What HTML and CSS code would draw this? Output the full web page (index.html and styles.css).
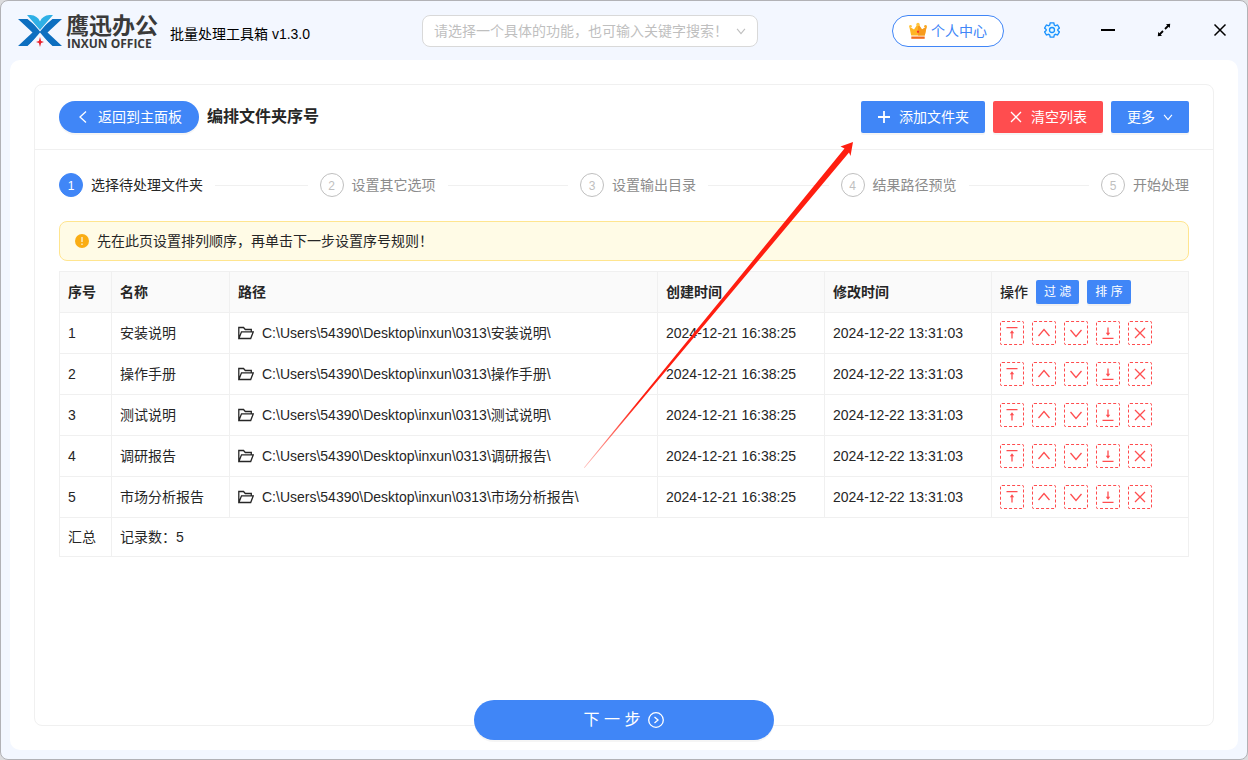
FILE: index.html
```html
<!DOCTYPE html>
<html lang="zh-CN">
<head>
  <meta charset="UTF-8">
  <meta name="viewport" content="width=device-width, initial-scale=1.0">
  <title>鹰迅办公 - 批量处理工具箱</title>
  <link rel="stylesheet" href="styles.css">
</head>
<body>
  <!-- shared icons -->
  <svg class="sprite" aria-hidden="true">
    <symbol id="i-left" viewBox="0 0 14 14"><path d="M10 1.500 4 7l6 5.500"/></symbol>
    <symbol id="i-up" viewBox="0 0 14 14"><path d="M1.500 10 7 3.500l5.500 6.500"/></symbol>
    <symbol id="i-down" viewBox="0 0 14 14"><path d="M1.500 4 7 10.500 12.500 4"/></symbol>
    <symbol id="i-plus" viewBox="0 0 14 14"><path d="M7 1v12M1 7h12" stroke-width="1.800"/></symbol>
    <symbol id="i-close" viewBox="0 0 14 14"><path d="M2 2l10 10M12 2 2 12"/></symbol>
    <symbol id="i-top" viewBox="0 0 14 14"><path d="M1.500 1.700h11M7 12.500V6"/><path d="M4.800 7.200 7 4.200l2.200 3z" class="fill"/></symbol>
    <symbol id="i-bottom" viewBox="0 0 14 14"><path d="M1.500 12.300h11M7 1.500V8"/><path d="M4.800 6.800 7 9.800l2.200-3z" class="fill"/></symbol>
    <symbol id="i-folder" viewBox="0 0 16 14"><path d="M3 12.500H.8V1.500h4.700l1.800 2h6v2.300M.9 12.500l2.600-6.700h11.800l-2.600 6.700z"/></symbol>
  </svg>

  <div class="window">
    <header class="titlebar">
      <div class="brand">
        <svg class="logo" viewBox="0 0 44 32" aria-hidden="true">
          <path fill="#0d6fc0" d="M0 4h9.500L22 14.500 34.500 4H44L29.500 17.500 44 31h-9.500L22 19.500 9.500 31H0l14.500-13.500z"/>
          <path fill="#f3f7ff" d="M22 17.500 10 31.500h24z"/>
          <path fill="#f3f7ff" d="M8 0h28L22 16.500z"/>
          <path fill="#2fb0e6" d="M9 0h3.500Q19.500.5 22 6.500 24.500.5 31.500 0H35L22 15z"/>
          <path fill="#e8222e" d="M22 22l1.100 3.900L26 27l-2.900 1.100L22 32l-1.100-3.900L18 27l2.900-1.100z"/>
        </svg>
        <div class="brand-name">
          <strong class="brand-cn">鹰迅办公</strong>
          <span class="brand-en">INXUN OFFICE</span>
        </div>
        <span class="version">批量处理工具箱 v1.3.0</span>
      </div>
      <div class="search">
        <input type="text" aria-label="搜索功能" placeholder="请选择一个具体的功能，也可输入关键字搜索！">
        <svg class="icon small"><use href="#i-down"/></svg>
      </div>
      <div class="tools">
        <button type="button" class="user">
          <svg class="crown" viewBox="0 0 18 18" aria-hidden="true">
            <path fill="#ffb524" d="M.3 4.500 5 7.500 8 3h2l3 4.500 4.700-3-1.900 9H2.200z"/>
            <path fill="#f79a1c" d="M9 3h1l3 4.500 4.700-3-1.900 9H9z"/>
            <circle cx="9" cy="2.500" r="1.700" fill="#ffc53d"/>
            <circle cx="1.500" cy="4.200" r="1.300" fill="#ffc53d"/>
            <circle cx="16.500" cy="4.200" r="1.300" fill="#f9a825"/>
            <path fill="#f5222d" d="M9 8.200l1.200 1.500L9 11.200 7.800 9.700z"/>
            <path fill="#f26a1b" d="M2.300 14.500h13.400v2.300H2.300z"/>
          </svg>
          个人中心
        </button>
        <button type="button" class="tool gear" aria-label="设置">
          <svg width="16" height="16" viewBox="0 0 16 16">
            <path d="M6.200.8h3.600l.5 2.200 1.200.7 2.100-.7 1.800 3.100L13.800 7.500v1l1.600 1.400-1.800 3.100-2.100-.7-1.200.7-.5 2.200H6.200L5.700 13l-1.200-.7-2.100.7L.6 9.900l1.600-1.400v-1L.6 6.100 2.400 3l2.100.7L5.700 3z"/>
            <circle cx="8" cy="8" r="2.500"/>
          </svg>
        </button>
        <button type="button" class="tool" aria-label="最小化">
          <svg width="14" height="14" viewBox="0 0 14 14"><path d="M0 7h14" stroke-width="2"/></svg>
        </button>
        <button type="button" class="tool" aria-label="最大化">
          <svg width="14" height="14" viewBox="0 0 14 14">
            <path d="M8 6l4-4M6 8l-4 4" stroke-width="1.800"/>
            <path class="fill" d="M9 1.200 13.200.8 12.800 5zM5 12.800.8 13.200 1.200 9z"/>
          </svg>
        </button>
        <button type="button" class="tool" aria-label="关闭">
          <svg width="14" height="14" viewBox="0 0 14 14"><path d="M1.500 1.500l11 11M12.500 1.500l-11 11" stroke-width="1.500"/></svg>
        </button>
      </div>
    </header>

    <main class="panel">
      <section class="card">
        <div class="card-head">
          <button type="button" class="btn pill"><svg class="icon"><use href="#i-left"/></svg>返回到主面板</button>
          <h1>编排文件夹序号</h1>
          <div class="actions">
            <button type="button" class="btn"><svg class="icon"><use href="#i-plus"/></svg>添加文件夹</button>
            <button type="button" class="btn danger"><svg class="icon"><use href="#i-close"/></svg>清空列表</button>
            <button type="button" class="btn">更多<svg class="icon small"><use href="#i-down"/></svg></button>
          </div>
        </div>

        <div class="card-body">
          <ol class="steps">
            <li class="step active"><span class="num">1</span>选择待处理文件夹</li>
            <li class="step"><span class="num">2</span>设置其它选项</li>
            <li class="step"><span class="num">3</span>设置输出目录</li>
            <li class="step"><span class="num">4</span>结果路径预览</li>
            <li class="step"><span class="num">5</span>开始处理</li>
          </ol>

          <div class="alert">
            <svg class="warn" viewBox="0 0 14 14" aria-hidden="true">
              <circle cx="7" cy="7" r="7" fill="#faad14"/>
              <path d="M7 3v5M7 9.500v1.500" stroke="#fffbe6" stroke-width="1.200"/>
            </svg>
            先在此页设置排列顺序，再单击下一步设置序号规则！
          </div>

          <table class="files">
            <colgroup>
              <col class="c-no">
              <col class="c-name">
              <col>
              <col class="c-time">
              <col class="c-time">
              <col class="c-ops">
            </colgroup>
            <thead>
              <tr>
                <th>序号</th>
                <th>名称</th>
                <th>路径</th>
                <th>创建时间</th>
                <th>修改时间</th>
                <th>
                  <div class="ops">
                    操作
                    <button type="button" class="btn mini">过 滤</button>
                    <button type="button" class="btn mini">排 序</button>
                  </div>
                </th>
              </tr>
            </thead>
            <tbody id="rows"></tbody>
            <tfoot>
              <tr>
                <td>汇总</td>
                <td colspan="5">记录数：5</td>
              </tr>
            </tfoot>
          </table>
        </div>
      </section>

      <button type="button" class="next">
        下 一 步
        <svg width="16" height="16" viewBox="0 0 16 16"><circle cx="8" cy="8" r="7.300"/><path d="M6.500 5l3.500 3-3.500 3"/></svg>
      </button>
    </main>

    <svg class="pointer" width="270" height="326" viewBox="0 0 270 326" aria-hidden="true">
      <defs>
        <linearGradient id="fade" x1="0" y1="1" x2="1" y2="0">
          <stop offset="0" stop-color="#ff1e10" stop-opacity="0.300"/>
          <stop offset="0.200" stop-color="#ff1e10"/>
        </linearGradient>
      </defs>
      <path fill="url(#fade)" d="M0 325.500 260.500 6.500 256.500 4.500 269 0 266.500 14 265 10.500.5 326z"/>
    </svg>
  </div>

  <script>
    const names = ['安装说明', '操作手册', '测试说明', '调研报告', '市场分析报告'];
    const ops = [
      ['top', '置顶'],
      ['up', '上移'],
      ['down', '下移'],
      ['bottom', '置底'],
      ['close', '删除']
    ];

    const buttons = ops.map(([icon, label]) =>
      `<button type="button" class="op" aria-label="${label}"><svg class="icon"><use href="#i-${icon}"/></svg></button>`
    ).join('');

    document.getElementById('rows').innerHTML = names.map((name, i) => `
      <tr>
        <td>${i + 1}</td>
        <td>${name}</td>
        <td><div class="path"><svg class="folder"><use href="#i-folder"/></svg>C:\\Users\\54390\\Desktop\\inxun\\0313\\${name}\\</div></td>
        <td>2024-12-21 16:38:25</td>
        <td>2024-12-22 13:31:03</td>
        <td><div class="ops">${buttons}</div></td>
      </tr>
    `).join('');
  </script>
</body>
</html>
```
FILE: styles.css
```css
* {
  box-sizing: border-box;
}
body {
  margin: 0;
  background: #dcdcde;
  font-family: "Liberation Sans", "Noto Sans CJK SC", sans-serif;
  font-size: 14px;
  line-height: 22px;
  color: #262626;
}
button, input {
  font: inherit;
}
button {
  cursor: pointer;
}
svg {
  flex: none;
  fill: none;
  stroke: currentColor;
  stroke-width: 1.3;
}
svg .fill {
  fill: currentColor;
  stroke: none;
}
.sprite {
  display: none;
}
.icon {
  width: 14px;
  height: 14px;
}
.icon.small {
  width: 10px;
  height: 10px;
  stroke-width: 1.6;
}

.window {
  position: relative;
  display: flex;
  flex-direction: column;
  min-height: 100vh;
  padding: 0 9px 9px;
  border: 1px solid #b2b2b6;
  border-radius: 8px;
  background: #f3f7ff;
}

/* title bar */
.titlebar {
  display: grid;
  grid-template-columns: 412px 336px 1fr;
  align-items: center;
  height: 59px;
}
.brand {
  display: flex;
  align-items: center;
  padding-left: 8px;
}
.logo {
  width: 44px;
  height: 32px;
  margin-right: 4px;
  stroke: none;
}
.brand-name {
  display: flex;
  flex-direction: column;
  color: #3a3a3a;
}
.brand-cn {
  font-size: 23px;
  line-height: 26px;
  font-weight: 700;
}
.brand-en {
  padding-left: 1px;
  font-family: "Open Sans", sans-serif;
  font-size: 12px;
  line-height: 10px;
  font-weight: 700;
}
.version {
  margin: 6px 0 0 12px;
  color: #000;
}
.search {
  display: flex;
  align-items: center;
  height: 32px;
  padding: 0 11px;
  border: 1px solid #d9d9d9;
  border-radius: 8px;
  background: #fff;
  color: #bfbfbf;
}
.search input {
  flex: 1;
  min-width: 0;
  padding: 0;
  border: 0;
  outline: 0;
  background: none;
  color: #262626;
}
.search input::placeholder {
  color: #bfbfbf;
  opacity: 1;
}
.tools {
  display: flex;
  align-items: center;
  justify-content: flex-end;
  margin-right: -10px;
}
.user {
  display: flex;
  align-items: center;
  gap: 4px;
  height: 32px;
  margin-right: 20px;
  padding: 0 16px;
  border: 1px solid #4086f7;
  border-radius: 16px;
  background: #fff;
  color: #4086f7;
}
.crown {
  width: 18px;
  height: 18px;
  stroke: none;
}
.tool {
  display: flex;
  align-items: center;
  justify-content: center;
  width: 56px;
  height: 32px;
  padding: 0 0 2px;
  border: 0;
  background: none;
  color: #000;
}
.gear {
  color: #1890ff;
}
.gear path {
  fill: #e6f7ff;
}

/* content */
.panel {
  position: relative;
  display: flex;
  flex: 1;
  padding: 24px;
  border-radius: 10px;
  background: #fff;
}
.card {
  flex: 1;
  min-width: 0;
  border: 1px solid #f0f0f0;
  border-radius: 8px;
}
.card-head {
  display: flex;
  align-items: center;
  gap: 8px;
  padding: 16px 24px;
  border-bottom: 1px solid #f0f0f0;
}
.card-head h1 {
  margin: 0;
  font-size: 16px;
  font-weight: 700;
}
.actions {
  display: flex;
  gap: 8px;
  margin-left: auto;
}
.btn {
  display: flex;
  align-items: center;
  gap: 8px;
  height: 32px;
  padding: 0 16px;
  border: 0;
  border-radius: 2px;
  background: #4086f7;
  box-shadow: 0 2px 0 rgba(0, 0, 0, 0.04);
  color: #fff;
  white-space: nowrap;
}
.btn.pill {
  padding: 0 17px;
  border-radius: 16px;
}
.btn.danger {
  background: #ff4d4f;
}
.btn.mini {
  height: 24px;
  padding: 0 8px;
  font-size: 12px;
  font-weight: 400;
}
.card-body {
  padding: 23px 24px;
}

.steps {
  display: flex;
  margin: 0 0 24px;
  padding: 0;
  list-style: none;
}
.step {
  display: flex;
  align-items: center;
  flex: 1;
  color: #8c8c8c;
  white-space: nowrap;
}
.step::after {
  content: "";
  flex: 1;
  height: 1px;
  margin: 0 12px;
  background: #f0f0f0;
}
.step:last-child {
  flex: none;
}
.step:last-child::after {
  display: none;
}
.num {
  width: 24px;
  height: 24px;
  margin-right: 8px;
  border: 1px solid #bfbfbf;
  border-radius: 50%;
  font-size: 12px;
  line-height: 24px;
  text-align: center;
  color: #bfbfbf;
}
.step.active {
  color: #262626;
}
.step.active .num {
  border-color: #4086f7;
  background: #4086f7;
  color: #fff;
}

.alert {
  display: flex;
  align-items: center;
  gap: 8px;
  margin-bottom: 10px;
  padding: 8px 15px;
  border: 1px solid #ffe58f;
  border-radius: 8px;
  background: #fffbe6;
}
.warn {
  width: 14px;
  height: 14px;
  stroke: none;
}

.files {
  width: 100%;
  table-layout: fixed;
  border-collapse: separate;
  border-spacing: 0;
  border: 1px solid #f0f0f0;
  border-width: 1px 0 0 1px;
}
.files th, .files td {
  padding: 8px;
  border: 1px solid #f0f0f0;
  border-width: 0 1px 1px 0;
  text-align: left;
  white-space: nowrap;
}
.files th {
  background: #fafafa;
  font-weight: 700;
}
.c-no {
  width: 52px;
}
.c-name {
  width: 118px;
}
.c-time {
  width: 167px;
}
.c-ops {
  width: 197px;
}
.path, .ops {
  display: flex;
  align-items: center;
  gap: 8px;
}
.files th .ops {
  font-weight: 500;
}
.folder {
  width: 16px;
  height: 14px;
}
.op {
  display: flex;
  align-items: center;
  justify-content: center;
  width: 24px;
  height: 24px;
  padding: 0;
  border: 1px dashed #ff4d4f;
  border-radius: 2px;
  background: #fff;
  color: #ff4d4f;
}

/* sits on the lower edge of the card */
.next {
  position: absolute;
  left: 50%;
  bottom: 10px;
  display: flex;
  align-items: center;
  justify-content: center;
  gap: 8px;
  width: 300px;
  height: 40px;
  border: 0;
  border-radius: 20px;
  background: #4086f7;
  box-shadow: 0 2px 0 rgba(0, 0, 0, 0.04);
  color: #fff;
  font-size: 16px;
  transform: translateX(-50%);
}

/* red arrow pointing at the add button */
.pointer {
  position: absolute;
  top: 141px;
  right: 393px;
  stroke: none;
  pointer-events: none;
}
```
